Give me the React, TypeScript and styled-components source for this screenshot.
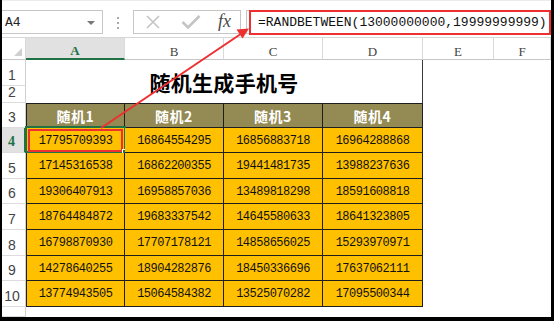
import React from "react";
import styled, { createGlobalStyle, css } from "styled-components";

const GlobalStyle = createGlobalStyle`
  html, body { margin: 0; padding: 0; background: #ffffff; }
  body { font-family: "Liberation Sans", Arial, sans-serif; }
`;

const Frame = styled.div`
  position: relative;
  box-sizing: border-box;
  width: 554px;
  height: 321px;
  border-left: 2px solid #000;
  border-right: 3px solid #000;
  border-bottom: 4px solid #000;
  background: #fff;
  overflow: hidden;
`;

const FormulaBar = styled.div`
  box-sizing: border-box;
  height: 38px;
  display: flex;
  align-items: flex-start;
  padding-top: 10px;
  border-top: 1px solid #ececec;
  border-bottom: 1px solid #d6d6d6;
  background: #fff;
`;

const NameBox = styled.div`
  box-sizing: border-box;
  width: 101px;
  height: 24px;
  margin-top: -1px;
  border: 1px solid #c6c6c6;
  border-left: none;
  display: flex;
  align-items: center;
  justify-content: space-between;
  padding: 1px 7px 0 3px;
  font-family: "Liberation Mono", monospace;
  font-size: 13px;
  color: #222;
`;

const DropArrow = styled.span`
  width: 0;
  height: 0;
  border-left: 4px solid transparent;
  border-right: 4px solid transparent;
  border-top: 4px solid #777;
`;

const Dots = styled.div`
  width: 31px;
  display: flex;
  flex-direction: column;
  align-items: center;
  gap: 3px;
  padding-top: 6px;
  & > span {
    width: 2px;
    height: 2px;
    background: #a8a8a8;
  }
`;

const FxBox = styled.div`
  box-sizing: border-box;
  width: 108px;
  height: 24px;
  margin-top: -1px;
  border: 1px solid #c6c6c6;
  display: flex;
  align-items: center;
  padding-left: 10px;
  gap: 0;
`;

const IconSlot = styled.div<{ $w: number }>`
  width: ${(p) => p.$w}px;
  display: flex;
  align-items: center;
  justify-content: center;
`;

const Fx = styled.span`
  font-family: "Liberation Serif", "Times New Roman", serif;
  font-style: italic;
  font-size: 18px;
  color: #4a4a4a;
  line-height: 1;
  margin-top: -2px;
`;

const FormulaBox = styled.div`
  box-sizing: border-box;
  flex: 1;
  margin-left: 5px;
  height: 24px;
  margin-top: -1px;
  border: 1px solid #c6c6c6;
  border-right: none;
  padding: 0 0 0 2px;
  display: flex;
  align-items: center;
`;

const FormulaMark = styled.div`
  box-sizing: border-box;
  width: 302px;
  height: 25px;
  border: 2px solid #ee2f2f;
  display: flex;
  align-items: center;
  padding-left: 7px;
  padding-top: 1px;
  font-family: "Liberation Mono", monospace;
  font-size: 13px;
  color: #111;
  white-space: nowrap;
`;

const Sheet = styled.div`
  display: grid;
  grid-template-columns: 24px 99px 99px 99px 100px 71px 1fr;
  grid-template-rows: 22px 26px 17px 25px 25px 26px 25px 26px 26px 25px 26px 10px;
`;

const Corner = styled.div`
  box-sizing: border-box;
  border-right: 1px solid #dadada;
  border-bottom: 1px solid #c6c6c6;
  display: flex;
  align-items: flex-end;
  justify-content: flex-end;
  padding: 0 3px 3px 0;
`;

const CornerTri = styled.span`
  width: 0;
  height: 0;
  border-left: 8px solid transparent;
  border-bottom: 8px solid #cfcfcf;
`;

const ColHeader = styled.div<{ $active?: boolean }>`
  box-sizing: border-box;
  display: flex;
  align-items: center;
  justify-content: center;
  padding-top: 6px;
  border-right: 1px solid #dadada;
  border-bottom: 1px solid #c6c6c6;
  font-family: "Liberation Serif", "Times New Roman", serif;
  font-size: 13px;
  color: #444;
  ${(p) =>
    p.$active &&
    css`
      background: #e1e1e1;
      color: #217346;
      font-weight: bold;
      border-bottom: 2px solid #217346;
    `}
`;

const RowHeader = styled.div<{ $active?: boolean }>`
  box-sizing: border-box;
  display: flex;
  align-items: flex-end;
  justify-content: center;
  padding: 0 3px 3px 0;
  border-right: 1px solid #d0d0d0;
  border-bottom: 1px solid #dcdcdc;
  font-family: "Liberation Sans", Arial, sans-serif;
  font-size: 14px;
  line-height: 1;
  color: #444;
  ${(p) =>
    p.$active &&
    css`
      background: #e1e1e1;
      color: #217346;
      font-family: "Liberation Serif", serif;
      font-weight: bold;
      border-right: 2px solid #217346;
    `}
`;

const TitleCell = styled.div`
  grid-column: span 4;
  grid-row: span 2;
  box-sizing: border-box;
  border-right: 1px solid #3a3a3a;
  display: flex;
  align-items: center;
  justify-content: center;
  padding-top: 1px;
  font-family: "Noto Sans CJK SC", sans-serif;
  font-weight: 700;
  font-size: 21px;
  letter-spacing: 0.3px;
  color: #000;
`;

const tableCell = css<{ $first?: boolean }>`
  box-sizing: border-box;
  display: flex;
  align-items: center;
  justify-content: center;
  border-right: 1px solid #1e1e1e;
  border-bottom: 1px solid #1e1e1e;
  ${(p) => p.$first && css`border-left: 1px solid #1e1e1e;`}
`;

const HeadCell = styled.div<{ $first?: boolean }>`
  ${tableCell}
  border-top: 1px solid #1e1e1e;
  background: #948a54;
  color: #fff;
  font-family: "Noto Sans CJK SC", sans-serif;
  font-weight: 700;
  font-size: 14px;
  letter-spacing: 0.5px;
`;

const DataCell = styled.div<{ $first?: boolean }>`
  ${tableCell}
  position: relative;
  background: #ffc000;
  color: #111;
  font-family: "Liberation Mono", monospace;
  font-size: 12px;
  letter-spacing: -0.5px;
  padding-top: 1px;
`;

const Blank = styled.div``;

const SelectionOutline = styled.div`
  position: absolute;
  left: -2px;
  top: -2px;
  right: -2px;
  bottom: -1px;
  border: 2px solid #217346;
  pointer-events: none;
`;

const RedMark = styled.div`
  position: absolute;
  left: 1px;
  top: 1px;
  right: 1px;
  bottom: 0px;
  border: 2px solid #ee2f2f;
  pointer-events: none;
`;

const FillHandle = styled.div`
  position: absolute;
  right: -5px;
  bottom: -4px;
  width: 5px;
  height: 5px;
  background: #217346;
  border: 1px solid #fff;
`;

const ArrowLayer = styled.svg`
  position: absolute;
  left: -2px;
  top: 0;
  width: 554px;
  height: 322px;
  pointer-events: none;
`;

const columns = ["A", "B", "C", "D", "E", "F"];
const heads = ["随机1", "随机2", "随机3", "随机4"];
const data = [
  ["17795709393", "16864554295", "16856883718", "16964288868"],
  ["17145316538", "16862200355", "19441481735", "13988237636"],
  ["19306407913", "16958857036", "13489818298", "18591608818"],
  ["18764484872", "19683337542", "14645580633", "18641323805"],
  ["16798870930", "17707178121", "14858656025", "15293970971"],
  ["14278640255", "18904282876", "18450336696", "17637062111"],
  ["13774943505", "15064584382", "13525070282", "17095500344"],
];

const XIcon = () => (
  <svg width="16" height="16" viewBox="0 0 16 16">
    <path d="M2 2 L14 14 M14 2 L2 14" stroke="#c4c4c4" strokeWidth="1.6" fill="none" />
  </svg>
);

const CheckIcon = () => (
  <svg width="20" height="16" viewBox="0 0 20 16">
    <path d="M1.5 8 L7 13.5 L18.5 2" stroke="#c4c4c4" strokeWidth="2.6" fill="none" />
  </svg>
);

export default function App() {
  return (
    <>
      <GlobalStyle />
      <Frame>
        <FormulaBar>
          <NameBox>
            <span>A4</span>
            <DropArrow />
          </NameBox>
          <Dots>
            <span />
            <span />
            <span />
          </Dots>
          <FxBox>
            <IconSlot $w={18}>
              <XIcon />
            </IconSlot>
            <IconSlot $w={18} />
            <IconSlot $w={22}>
              <CheckIcon />
            </IconSlot>
            <IconSlot $w={12} />
            <IconSlot $w={20}>
              <Fx>fx</Fx>
            </IconSlot>
          </FxBox>
          <FormulaBox>
            <FormulaMark>=RANDBETWEEN(13000000000,19999999999)</FormulaMark>
          </FormulaBox>
        </FormulaBar>
        <Sheet>
          <Corner>
            <CornerTri />
          </Corner>
          {columns.map((c) => (
            <ColHeader key={c} $active={c === "A"}>
              {c}
            </ColHeader>
          ))}

          <RowHeader>1</RowHeader>
          <TitleCell>随机生成手机号</TitleCell>
          <Blank />
          <Blank />
          <RowHeader>2</RowHeader>
          <Blank />
          <Blank />

          <RowHeader>3</RowHeader>
          {heads.map((h, i) => (
            <HeadCell key={h} $first={i === 0}>
              {h}
            </HeadCell>
          ))}
          <Blank />
          <Blank />

          {data.map((row, r) => (
            <React.Fragment key={r}>
              <RowHeader $active={r === 0}>{r + 4}</RowHeader>
              {row.map((v, c) => (
                <DataCell key={c} $first={c === 0}>
                  {v}
                  {r === 0 && c === 0 && (
                    <>
                      <SelectionOutline />
                      <RedMark />
                      <FillHandle />
                    </>
                  )}
                </DataCell>
              ))}
              <Blank />
              <Blank />
            </React.Fragment>
          ))}
          <RowHeader />
          <Blank />
        </Sheet>
        <ArrowLayer viewBox="0 0 554 322">
          <line x1="101" y1="128" x2="240" y2="34.5" stroke="#ee2f2f" strokeWidth="2" />
          <polygon points="249,28.5 236.5,29.5 242.5,38.5" fill="#ee2f2f" />
        </ArrowLayer>
      </Frame>
    </>
  );
}
